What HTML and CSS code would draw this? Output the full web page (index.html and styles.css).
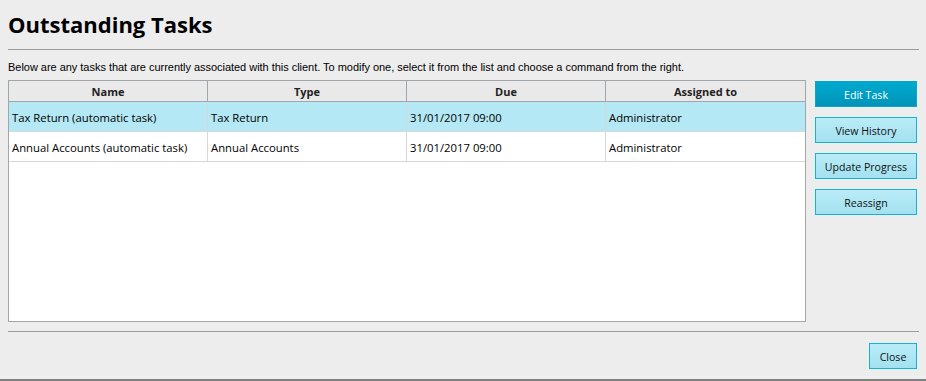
FILE: index.html
```html
<!DOCTYPE html>
<html>
<head>
<meta charset="utf-8">
<link rel="stylesheet" href="styles.css">
</head>
<body>
<div class="page">
  <h1 class="title">Outstanding Tasks</h1>
  <div class="rule"></div>
  <p class="intro">Below are any tasks that are currently associated with this client. To modify one, select it from the list and choose a command from the right.</p>
  <div class="main">
    <div class="grid">
      <div class="row head">
        <div class="cell">Name</div>
        <div class="cell">Type</div>
        <div class="cell">Due</div>
        <div class="cell">Assigned to</div>
      </div>
      <div class="row sel">
        <div class="cell">Tax Return (automatic task)</div>
        <div class="cell">Tax Return</div>
        <div class="cell">31/01/2017 09:00</div>
        <div class="cell">Administrator</div>
      </div>
      <div class="row">
        <div class="cell">Annual Accounts (automatic task)</div>
        <div class="cell">Annual Accounts</div>
        <div class="cell">31/01/2017 09:00</div>
        <div class="cell">Administrator</div>
      </div>
    </div>
    <div class="actions">
      <button class="btn primary">Edit Task</button>
      <button class="btn">View History</button>
      <button class="btn">Update Progress</button>
      <button class="btn">Reassign</button>
    </div>
  </div>
  <div class="rule lower"></div>
  <div class="footer">
    <button class="btn close">Close</button>
  </div>
</div>
</body>
</html>
```
FILE: styles.css
```css
* { box-sizing: border-box; }
html, body { margin: 0; padding: 0; }
body {
  background: #ededed;
  width: 926px;
  height: 381px;
  overflow: hidden;
  border-bottom: 2px solid #808080;
}
.page {
  padding: 0 7px 0 8px;
  height: 379px;
  display: flex;
  flex-direction: column;
}
.title {
  margin: 0;
  padding-top: 9px;
  height: 49px;
  font-family: "Open Sans", sans-serif;
  font-weight: 700;
  font-size: 22px;
  line-height: 30px;
  color: #000;
}
.rule {
  height: 1px;
  flex: none;
  background: #9c9c9c;
}
.intro {
  margin: 0;
  padding-top: 10px;
  height: 30px;
  font-family: "Liberation Sans", Arial, sans-serif;
  font-size: 11px;
  line-height: 14px;
  letter-spacing: -0.03px;
  color: #000;
}
.main {
  display: flex;
  gap: 9px;
  height: 251px;
}
.grid {
  width: 798px;
  height: 242px;
  background: #fff;
  border: 1px solid #a0a6aa;
  display: flex;
  flex-direction: column;
}
.row {
  display: grid;
  grid-template-columns: 199px 199px 199px 199px;
  height: 30px;
  border-bottom: 1px solid #d8d8d8;
  font-family: "Open Sans", sans-serif;
  font-size: 11.3px;
  color: #000;
}
.row.head {
  height: 21px;
  background: #e9e9e9;
  border-bottom: 1px solid #a0a6aa;
  font-weight: 700;
  font-size: 11px;
}
.row.sel { background: #b4e8f4; }
.cell {
  padding-left: 3px;
  padding-top: 1px;
  display: flex;
  align-items: center;
  border-right: 1px solid #d8d8d8;
  white-space: nowrap;
}
.head .cell {
  justify-content: center;
  border-right-color: #a0a6aa;
  padding-left: 0;
  padding-top: 0;
  color: #222;
}
.cell:last-child { border-right: none; }
.actions {
  display: flex;
  flex-direction: column;
  gap: 10px;
  padding-top: 1px;
}
.btn {
  width: 102px;
  height: 26px;
  border: 1px solid #12b4d6;
  background: linear-gradient(#b9ecf7, #a3e1f0);
  font-family: "Open Sans", sans-serif;
  font-size: 10.6px;
  color: #111;
  padding: 2px 0 0;
  margin: 0;
}
.btn.primary {
  background: linear-gradient(#00a9cf, #0094b8);
  border-color: #0aa6c8;
  color: #fff;
}
.footer {
  display: flex;
  justify-content: flex-end;
  padding-top: 11px;
  padding-right: 2px;
}
.btn.close {
  width: 48px;
  height: 26px;
}
```
